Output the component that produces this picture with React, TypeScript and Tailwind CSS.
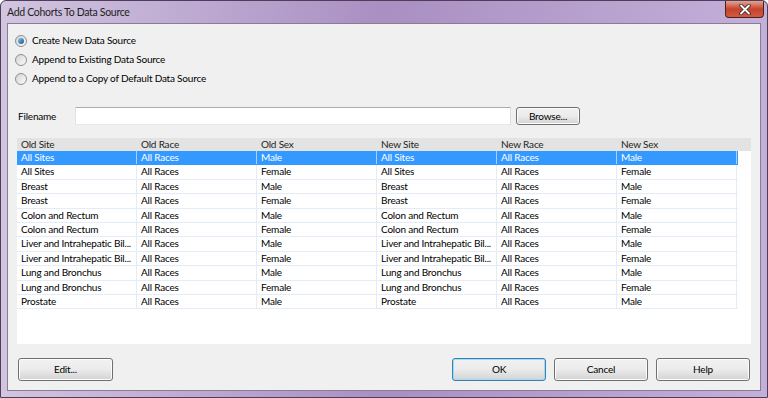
import React from "react";

const rows: string[][] = [
  ["All Sites", "All Races", "Male", "All Sites", "All Races", "Male"],
  ["All Sites", "All Races", "Female", "All Sites", "All Races", "Female"],
  ["Breast", "All Races", "Male", "Breast", "All Races", "Male"],
  ["Breast", "All Races", "Female", "Breast", "All Races", "Female"],
  ["Colon and Rectum", "All Races", "Male", "Colon and Rectum", "All Races", "Male"],
  ["Colon and Rectum", "All Races", "Female", "Colon and Rectum", "All Races", "Female"],
  ["Liver and Intrahepatic Bil...", "All Races", "Male", "Liver and Intrahepatic Bil...", "All Races", "Male"],
  ["Liver and Intrahepatic Bil...", "All Races", "Female", "Liver and Intrahepatic Bil...", "All Races", "Female"],
  ["Lung and Bronchus", "All Races", "Male", "Lung and Bronchus", "All Races", "Male"],
  ["Lung and Bronchus", "All Races", "Female", "Lung and Bronchus", "All Races", "Female"],
  ["Prostate", "All Races", "Male", "Prostate", "All Races", "Male"],
];

const headers = ["Old Site", "Old Race", "Old Sex", "New Site", "New Race", "New Sex"];

function Radio({ checked, label }: { checked?: boolean; label: string }) {
  return (
    <div className="flex items-center h-[19px]">
      <span className="w-[12px] h-[12px] rounded-full border border-[#8e8f8f] bg-gradient-to-br from-[#d4d4d4] to-[#fbfbfb] flex items-center justify-center ml-[2px]">
        {checked && (
          <span className="w-[6px] h-[6px] rounded-full bg-gradient-to-br from-[#7fcaf2] to-[#13558d]" />
        )}
      </span>
      <span className="ml-[5px]">{label}</span>
    </div>
  );
}

function Btn({ label, focused, w }: { label: string; focused?: boolean; w: string }) {
  return (
    <div
      className={`${w} rounded-[3px] border flex items-center justify-center bg-gradient-to-b from-[#f2f2f2] via-[#ebebeb] to-[#d3d3d3] ${
        focused ? "border-[#3c7fb1] shadow-[inset_0_0_0_1px_#9fdcf5]" : "border-[#707070] shadow-[inset_0_0_0_1px_#fcfcfc]"
      }`}
    >
      {label}
    </div>
  );
}

export default function App() {
  return (
    <div
      className="w-[768px] h-[398px] relative overflow-hidden border border-[#4b3f5c] rounded-t-[6px] bg-gradient-to-r from-[#d2c5e0] via-[#a98fc2] to-[#c3b0d8] flex flex-col text-[10px] tracking-[-0.2px] text-black"
      style={{ fontFamily: 'Lato, "Noto Sans", sans-serif' }}
    >
      {/* title bar */}
      <div className="h-[22px] flex items-center pl-[6px] shrink-0">
        <span className="text-[10.5px] tracking-[-0.3px] text-[#1e1e1e] leading-none">Add Cohorts To Data Source</span>
      </div>
      <div className="absolute top-0 left-[724px] w-[39px] h-[17px] rounded-b-[4px] border border-t-0 border-[#4a2020] bg-gradient-to-b from-[#e3a293] via-[#c7422c] to-[#ce5a3e] flex items-center justify-center">
        <svg width="12" height="11" viewBox="0 0 12 11">
          <path d="M2 1.5l8 8M10 1.5l-8 8" stroke="#3b2a2a" strokeWidth="3.6" strokeLinecap="round" />
          <path d="M2 1.5l8 8M10 1.5l-8 8" stroke="#fff" strokeWidth="1.8" strokeLinecap="round" />
        </svg>
      </div>

      {/* content */}
      <div className="mx-[6px] mb-[6px] flex-1 bg-[#f0f0f0] border border-[#8a7c98] flex flex-col">
        <div className="pt-[7px] pl-[5px] flex flex-col">
          <Radio checked label="Create New Data Source" />
          <Radio label="Append to Existing Data Source" />
          <Radio label="Append to a Copy of Default Data Source" />
        </div>

        <div className="flex items-center mt-[19px] h-[18px]">
          <span className="ml-[10px] w-[57px]">Filename</span>
          <div className="w-[436px] h-[18px] bg-white border border-[#abadb3] border-l-[#e2e3ea] border-r-[#dbdfe6] border-b-[#e3e9ef]" />
          <div className="ml-[5px]">
            <Btn label="Browse..." w="w-[64px] h-[18px]" />
          </div>
        </div>

        <div className="mt-[13px] mx-[9px] h-[206px] bg-white flex flex-col">
          <div className="flex h-[13px] bg-[#e3e3e3] shrink-0 leading-[13px]">
            {headers.map((h) => (
              <div key={h} className="w-[120px] pl-[4px] text-[#1e1e1e] overflow-hidden whitespace-nowrap">
                {h}
              </div>
            ))}
          </div>
          {rows.map((r, i) => (
            <div
              key={i}
              className={`flex h-[14.4px] leading-[13px] border-b w-[721px] ${
                i === 0 ? "bg-[#3399ff] text-white border-[#3399ff]" : "border-[#e4edf7]"
              }`}
            >
              {r.map((c, j) => (
                <div
                  key={j}
                  className={`w-[120px] pl-[4px] overflow-hidden whitespace-nowrap border-r ${
                    i === 0 ? "border-[#a9d1fb]" : "border-[#e4edf7]"
                  }`}
                >
                  {c}
                </div>
              ))}
            </div>
          ))}
        </div>

        <div className="flex items-center mt-[14px] px-[10px]">
          <Btn label="Edit..." w="w-[95px] h-[23px]" />
          <div className="flex-1" />
          <div className="flex gap-[8px]">
            <Btn label="OK" focused w="w-[94px] h-[23px]" />
            <Btn label="Cancel" w="w-[94px] h-[23px]" />
            <Btn label="Help" w="w-[94px] h-[23px]" />
          </div>
        </div>
      </div>
    </div>
  );
}
